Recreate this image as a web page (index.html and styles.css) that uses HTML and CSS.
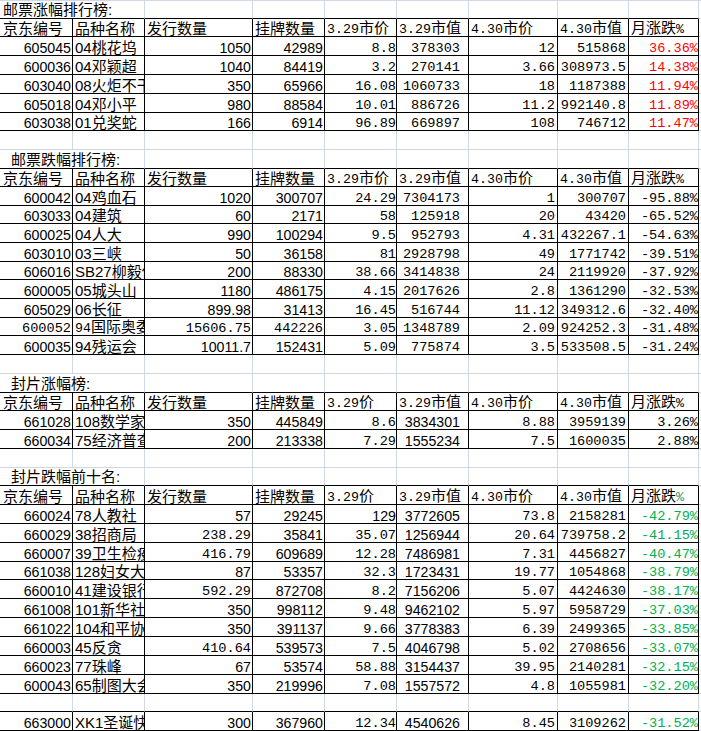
FILE: index.html
```html
<!DOCTYPE html>
<html lang="zh-CN">
<head>
<meta charset="utf-8">
<title>邮票涨跌幅排行榜</title>
<link rel="stylesheet" href="styles.css">
</head>
<body>
<div class="sheet">
  <!-- r1 -->
  <div class="row s cap"><span class="title">邮票涨幅排行榜:</span><span></span><span></span><span></span><span></span><span></span><span></span><span></span><span class="x"></span></div>
  <!-- r2 header -->
  <div class="row s tb"><span class="t">京东编号</span><span class="t">品种名称</span><span class="t">发行数量</span><span class="t">挂牌数量</span><span class="hm">3.29<span class="k">市价</span></span><span class="hm">3.29<span class="k">市值</span></span><span class="hm">4.30<span class="k">市价</span></span><span class="hm">4.30<span class="k">市值</span></span><span class="hm"><span class="k">月涨跌</span>%</span><span class="x"></span></div>
  <div class="row tb"><span class="n">605045</span><span class="t">04桃花坞</span><span class="n">1050</span><span class="n">42989</span><span class="m">8.8</span><span class="m">378303</span><span class="m">12</span><span class="m">515868</span><span class="m red">36.36%</span><span class="x"></span></div>
  <div class="row tb"><span class="n">600036</span><span class="t">04邓颖超</span><span class="n">1040</span><span class="n">84419</span><span class="m">3.2</span><span class="m">270141</span><span class="m">3.66</span><span class="m">308973.5</span><span class="m red">14.38%</span><span class="x"></span></div>
  <div class="row tb"><span class="n">603040</span><span class="t">08火炬不干胶</span><span class="n">350</span><span class="n">65966</span><span class="m">16.08</span><span class="m">1060733</span><span class="m">18</span><span class="m">1187388</span><span class="m red">11.94%</span><span class="x"></span></div>
  <div class="row tb"><span class="n">605018</span><span class="t">04邓小平</span><span class="n">980</span><span class="n">88584</span><span class="m">10.01</span><span class="m">886726</span><span class="m">11.2</span><span class="m">992140.8</span><span class="m red">11.89%</span><span class="x"></span></div>
  <div class="row s tb"><span class="n">603038</span><span class="t">01兑奖蛇</span><span class="n">166</span><span class="n">6914</span><span class="m">96.89</span><span class="m">669897</span><span class="m">108</span><span class="m">746712</span><span class="m red">11.47%</span><span class="x"></span></div>
  <!-- r8 empty -->
  <div class="row"><span></span><span></span><span></span><span></span><span></span><span></span><span></span><span></span><span></span><span class="x"></span></div>
  <!-- r9 -->
  <div class="row cap"><span class="title ind">邮票跌幅排行榜:</span><span></span><span></span><span></span><span></span><span></span><span></span><span></span><span class="x"></span></div>
  <!-- r10 header -->
  <div class="row s tb"><span class="t">京东编号</span><span class="t">品种名称</span><span class="t">发行数量</span><span class="t">挂牌数量</span><span class="hm">3.29<span class="k">市价</span></span><span class="hm">3.29<span class="k">市值</span></span><span class="hm">4.30<span class="k">市价</span></span><span class="hm">4.30<span class="k">市值</span></span><span class="hm"><span class="k">月涨跌</span>%</span><span class="x"></span></div>
  <div class="row tb"><span class="n">600042</span><span class="t">04鸡血石</span><span class="n">1020</span><span class="n">300707</span><span class="m">24.29</span><span class="m">7304173</span><span class="m">1</span><span class="m">300707</span><span class="m">-95.88%</span><span class="x"></span></div>
  <div class="row s tb"><span class="n">603033</span><span class="t">04建筑</span><span class="n">60</span><span class="n">2171</span><span class="m">58</span><span class="m">125918</span><span class="m">20</span><span class="m">43420</span><span class="m">-65.52%</span><span class="x"></span></div>
  <div class="row tb"><span class="n">600025</span><span class="t">04人大</span><span class="n">990</span><span class="n">100294</span><span class="m">9.5</span><span class="m">952793</span><span class="m">4.31</span><span class="m">432267.1</span><span class="m">-54.63%</span><span class="x"></span></div>
  <div class="row tb"><span class="n">603010</span><span class="t">03三峡</span><span class="n">50</span><span class="n">36158</span><span class="m">81</span><span class="m">2928798</span><span class="m">49</span><span class="m">1771742</span><span class="m">-39.51%</span><span class="x"></span></div>
  <div class="row s tb"><span class="n">606016</span><span class="t">SB27柳毅传书</span><span class="n">200</span><span class="n">88330</span><span class="m">38.66</span><span class="m">3414838</span><span class="m">24</span><span class="m">2119920</span><span class="m">-37.92%</span><span class="x"></span></div>
  <div class="row tb"><span class="n">600005</span><span class="t">05城头山</span><span class="n">1180</span><span class="n">486175</span><span class="m">4.15</span><span class="m">2017626</span><span class="m">2.8</span><span class="m">1361290</span><span class="m">-32.53%</span><span class="x"></span></div>
  <div class="row tb"><span class="n">605029</span><span class="t">06长征</span><span class="n">899.98</span><span class="n">31413</span><span class="m">16.45</span><span class="m">516744</span><span class="m">11.12</span><span class="m">349312.6</span><span class="m">-32.40%</span><span class="x"></span></div>
  <div class="row s tb"><span class="m">600052</span><span class="hm">94<span class="k">国际奥委会</span></span><span class="m">15606.75</span><span class="m">442226</span><span class="m">3.05</span><span class="m">1348789</span><span class="m">2.09</span><span class="m">924252.3</span><span class="m">-31.48%</span><span class="x"></span></div>
  <div class="row tb"><span class="n">600035</span><span class="t">94残运会</span><span class="n">10011.7</span><span class="n">152431</span><span class="m">5.09</span><span class="m">775874</span><span class="m">3.5</span><span class="m">533508.5</span><span class="m">-31.24%</span><span class="x"></span></div>
  <!-- r20 empty -->
  <div class="row"><span></span><span></span><span></span><span></span><span></span><span></span><span></span><span></span><span></span><span class="x"></span></div>
  <!-- r21 -->
  <div class="row cap"><span class="title ind">封片涨幅榜:</span><span></span><span></span><span></span><span></span><span></span><span></span><span></span><span class="x"></span></div>
  <!-- r22 header -->
  <div class="row s tb"><span class="t">京东编号</span><span class="t">品种名称</span><span class="t">发行数量</span><span class="t">挂牌数量</span><span class="hm">3.29<span class="k">价</span></span><span class="hm">3.29<span class="k">市值</span></span><span class="hm">4.30<span class="k">市价</span></span><span class="hm">4.30<span class="k">市值</span></span><span class="hm"><span class="k">月涨跌</span>%</span><span class="x"></span></div>
  <div class="row tb"><span class="n">661028</span><span class="t">108数学家</span><span class="n">350</span><span class="n">445849</span><span class="m">8.6</span><span class="n">3834301</span><span class="m">8.88</span><span class="m">3959139</span><span class="m">3.26%</span><span class="x"></span></div>
  <div class="row tb"><span class="n">660034</span><span class="t">75经济普查</span><span class="n">200</span><span class="n">213338</span><span class="m">7.29</span><span class="n">1555234</span><span class="m">7.5</span><span class="m">1600035</span><span class="m">2.88%</span><span class="x"></span></div>
  <!-- r25 empty -->
  <div class="row"><span></span><span></span><span></span><span></span><span></span><span></span><span></span><span></span><span></span><span class="x"></span></div>
  <!-- r26 -->
  <div class="row s cap"><span class="title ind">封片跌幅前十名:</span><span></span><span></span><span></span><span></span><span></span><span></span><span></span><span class="x"></span></div>
  <!-- r27 header -->
  <div class="row tb"><span class="t">京东编号</span><span class="t">品种名称</span><span class="t">发行数量</span><span class="t">挂牌数量</span><span class="hm">3.29<span class="k">价</span></span><span class="hm">3.29<span class="k">市值</span></span><span class="hm">4.30<span class="k">市价</span></span><span class="hm">4.30<span class="k">市值</span></span><span class="hm"><span class="k">月涨跌</span><span class="pct">%</span></span><span class="x"></span></div>
  <div class="row tb"><span class="n">660024</span><span class="t">78人教社</span><span class="n">57</span><span class="n">29245</span><span class="n">129</span><span class="n">3772605</span><span class="m">73.8</span><span class="m">2158281</span><span class="m grn">-42.79%</span><span class="x"></span></div>
  <div class="row tb"><span class="n">660029</span><span class="t">38招商局</span><span class="m">238.29</span><span class="n">35841</span><span class="m">35.07</span><span class="n">1256944</span><span class="m">20.64</span><span class="m">739758.2</span><span class="m grn">-41.15%</span><span class="x"></span></div>
  <div class="row tb"><span class="n">660007</span><span class="t">39卫生检疫</span><span class="m">416.79</span><span class="n">609689</span><span class="m">12.28</span><span class="n">7486981</span><span class="m">7.31</span><span class="m">4456827</span><span class="m grn">-40.47%</span><span class="x"></span></div>
  <div class="row s tb"><span class="n">661038</span><span class="t">128妇女大会</span><span class="n">87</span><span class="n">53357</span><span class="m">32.3</span><span class="n">1723431</span><span class="m">19.77</span><span class="m">1054868</span><span class="m grn">-38.79%</span><span class="x"></span></div>
  <div class="row tb"><span class="n">660010</span><span class="t">41建设银行</span><span class="m">592.29</span><span class="n">872708</span><span class="m">8.2</span><span class="n">7156206</span><span class="m">5.07</span><span class="m">4424630</span><span class="m grn">-38.17%</span><span class="x"></span></div>
  <div class="row tb"><span class="n">661008</span><span class="t">101新华社成立</span><span class="n">350</span><span class="n">998112</span><span class="m">9.48</span><span class="n">9462102</span><span class="m">5.97</span><span class="m">5958729</span><span class="m grn">-37.03%</span><span class="x"></span></div>
  <div class="row tb"><span class="n">661022</span><span class="t">104和平协议</span><span class="n">350</span><span class="n">391137</span><span class="m">9.66</span><span class="n">3778383</span><span class="m">6.39</span><span class="m">2499365</span><span class="m grn">-33.85%</span><span class="x"></span></div>
  <div class="row tb"><span class="n">660003</span><span class="t">45反贪</span><span class="m">410.64</span><span class="n">539573</span><span class="m">7.5</span><span class="n">4046798</span><span class="m">5.02</span><span class="m">2708656</span><span class="m grn">-33.07%</span><span class="x"></span></div>
  <div class="row tb"><span class="n">660023</span><span class="t">77珠峰</span><span class="n">67</span><span class="n">53574</span><span class="m">58.88</span><span class="n">3154437</span><span class="m">39.95</span><span class="m">2140281</span><span class="m grn">-32.15%</span><span class="x"></span></div>
  <div class="row tb"><span class="n">600043</span><span class="t">65制图大会</span><span class="n">350</span><span class="n">219996</span><span class="m">7.08</span><span class="n">1557572</span><span class="m">4.8</span><span class="m">1055981</span><span class="m grn">-32.20%</span><span class="x"></span></div>
  <!-- r38 empty above last row -->
  <div class="row s cap"><span></span><span></span><span></span><span></span><span></span><span></span><span></span><span></span><span></span><span class="x"></span></div>
  <!-- r39 -->
  <div class="row tb"><span class="n">663000</span><span class="t">XK1圣诞快乐</span><span class="n">300</span><span class="n">367960</span><span class="m">12.34</span><span class="n">4540626</span><span class="m">8.45</span><span class="m">3109262</span><span class="m grn">-31.52%</span><span class="x"></span></div>
</div>
</body>
</html>
```

FILE: styles.css
```css
html, body {
  margin: 0;
  padding: 0;
  background: #ffffff;
}

body {
  width: 701px;
  height: 731px;
  overflow: hidden;
}

.sheet {
  border-top: 1px solid #d0d7e5;
  color: #000000;
  font-family: "Liberation Sans", "Noto Sans CJK SC", sans-serif;
}

.row {
  display: grid;
  grid-template-columns: 73px 72px 108px 72px 72px 72px 89px 71px 70px 2px;
  height: 19px;
}

.row.s {
  height: 18px;
}

.row > span {
  box-sizing: border-box;
  min-width: 0;
  display: flex;
  align-items: flex-end;
  overflow: hidden;
  white-space: nowrap;
  padding: 0 1px 0 2px;
  border-right: 1px solid #d0d7e5;
  border-bottom: 1px solid #d0d7e5;
}

.row > span:first-child {
  padding-left: 3px;
}

.tb > span:not(.x) {
  border-color: #000000;
}

.cap > span:not(.x) {
  border-bottom-color: #000000;
}

/* per column right padding in the tables */
.tb > span:nth-child(5) {
  padding-right: 0;
}

.tb > span:nth-child(6) {
  padding-right: 8px;
}

.tb > span:nth-child(7),
.tb > span:nth-child(8) {
  padding-right: 2px;
}

.tb > span:nth-child(9) {
  padding-right: 0;
}

.row > .title {
  grid-column: span 2;
  font-size: 15px;
  line-height: 14px;
  padding-bottom: 1px;
}

.row > .title.ind {
  padding-left: 11px;
}

/* text cells (names, headers) */
.t {
  font-size: 15px;
  line-height: 14px;
}

/* sans numbers */
.n {
  justify-content: flex-end;
  font-size: 14.2px;
  line-height: 14px;
}

/* SimSun-like mono numbers */
.m {
  justify-content: flex-end;
  font-family: "Liberation Mono", "Noto Sans CJK SC", monospace;
  font-size: 13.6px;
  line-height: 13px;
}

/* mono headers with CJK parts */
.hm {
  font-family: "Liberation Mono", "Noto Sans CJK SC", monospace;
  font-size: 13.3px;
  line-height: 13px;
}

.k {
  font-size: 15px;
}

.pct {
  color: #2f8f6f;
}

.red {
  color: #ff0000;
}

.grn {
  color: #00b050;
}
```
